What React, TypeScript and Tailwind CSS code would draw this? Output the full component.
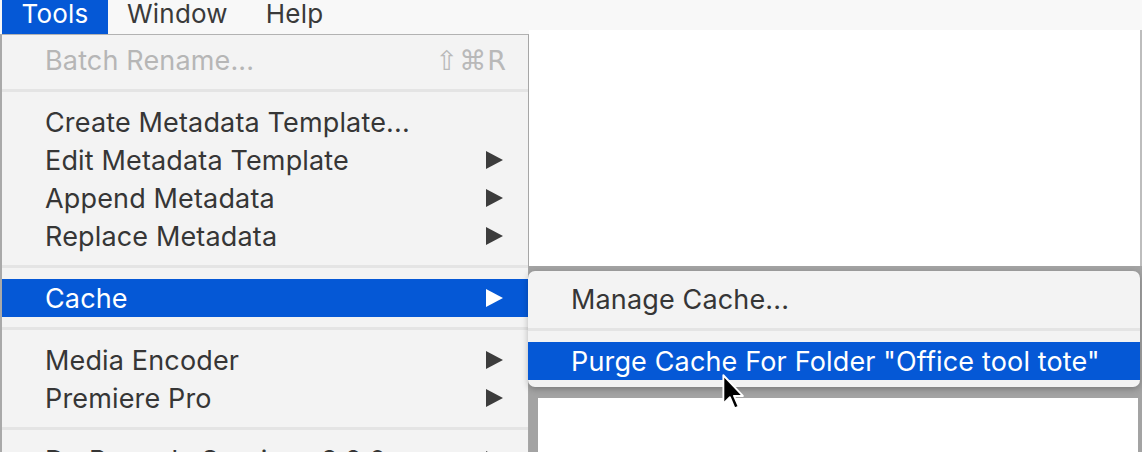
import React from "react";

const Tri = ({ white }: { white?: boolean }) => (
  <svg width="17" height="18" viewBox="0 0 17 18">
    <path d="M0 0L17 9L0 18Z" fill={white ? "#ffffff" : "#3c3c3c"} />
  </svg>
);

const Row = ({
  label,
  arrow,
  active,
  disabled,
  shortcut,
}: {
  label: string;
  arrow?: boolean;
  active?: boolean;
  disabled?: boolean;
  shortcut?: string;
}) => (
  <div
    className={
      "h-[38px] flex items-center justify-between pl-[43px] pr-[25px] " +
      (active ? "bg-[#0558d6] text-white" : disabled ? "text-[#b6b6b6]" : "text-[#363636]")
    }
  >
    <span>{label}</span>
    {arrow && <Tri white={active} />}
    {shortcut && (
      <span className="-mr-[4px] font-['DejaVu_Sans',sans-serif] text-[27px] tracking-[1px] text-[#b9b9b9]">{shortcut}</span>
    )}
  </div>
);

const Sep = () => (
  <div className="h-[24px] flex flex-col pt-[10px]">
    <div className="h-[3px] bg-[#e4e4e4]" />
  </div>
);

export default function App() {
  return (
    <div className="w-[1142px] h-[452px] overflow-hidden bg-white relative font-['Inter',sans-serif] text-[27px] tracking-[0.15px] leading-none">
      <header className="h-[34px] bg-[#f8f8f8] flex items-start text-[26px] tracking-[0.2px] text-[#3a3a3a]">
        <div className="ml-[2px] h-[34px] w-[106px] bg-[#0558d6] text-white flex justify-center pt-[1px]">Tools</div>
        <div className="ml-[19px] pt-[1px]">Window</div>
        <div className="ml-[38px] pt-[1px]">Help</div>
      </header>
      <div className="flex">
        <div className="w-[529px] shrink-0 border-l-[2px] border-l-[#a9a9a9] border-t border-t-[#b2b2b2] border-r border-r-[#a6a6a6] bg-[#f3f3f3] h-[420px] pt-[6px]">
          <Row label="Batch Rename..." disabled shortcut="⇧⌘R" />
          <Sep />
          <Row label="Create Metadata Template..." />
          <Row label="Edit Metadata Template" arrow />
          <Row label="Append Metadata" arrow />
          <Row label="Replace Metadata" arrow />
          <Sep />
          <Row label="Cache" arrow active />
          <Sep />
          <Row label="Media Encoder" arrow />
          <Row label="Premiere Pro" arrow />
          <Sep />
          <Row label="Dr. Brown's Services 3.2.0" arrow />
        </div>
        <div className="flex-1 -mt-[4px] flex flex-col">
          <div className="h-[236px] flex">
            <div className="flex-1 bg-white" />
            <div className="w-[2px] bg-[#bdbdbd]" />
          </div>
          <div className="flex-1 bg-[#a3a3a3] flex flex-col pt-[5px]">
            <div className="-ml-[1px] mr-[2px] rounded-[7px] bg-[#f3f3f3] pt-[9px] pb-[7px] overflow-hidden shadow-[0_2px_6px_rgba(0,0,0,0.25)] text-[#363636]">
              <div className="h-[38px] flex items-center pl-[43px]">Manage Cache...</div>
              <Sep />
              <div className="h-[38px] flex items-center pl-[43px] bg-[#0558d6] text-white">
                Purge Cache For Folder "Office tool tote"
              </div>
            </div>
            <div className="mt-[11px] ml-[9px] mr-[4px] flex-1 bg-white" />
          </div>
        </div>
      </div>
      <svg className="absolute left-[721px] top-[374px]" width="26" height="38" viewBox="0 0 22 32">
        <path d="M2 1 L2 25 L7.5 19.5 L11.5 29 L15 27.5 L11 18.5 L18.5 18.5 Z" fill="#000" stroke="#fff" strokeWidth="1.6" strokeLinejoin="round" />
      </svg>
    </div>
  );
}
